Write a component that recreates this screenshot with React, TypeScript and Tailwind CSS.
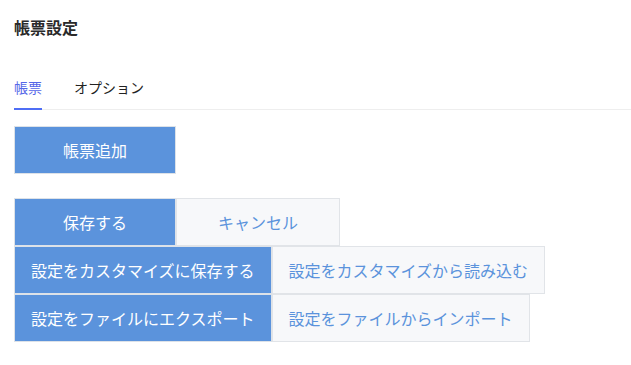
const font = { fontFamily: '"Noto Sans CJK JP", "Noto Sans", sans-serif' };

const primary =
  "h-12 min-w-[162px] px-4 border border-[#dde2e8] bg-[#5b93dc] text-[16px] text-white whitespace-nowrap";
const secondary =
  "h-12 min-w-[164px] px-4 border border-[#e1e4e8] bg-[#f7f8fa] text-[16px] text-[#5b93dc] whitespace-nowrap";

const rows: [string, string][] = [
  ["保存する", "キャンセル"],
  ["設定をカスタマイズに保存する", "設定をカスタマイズから読み込む"],
  ["設定をファイルにエクスポート", "設定をファイルからインポート"],
];

export default function App() {
  return (
    <div className="min-h-[365px] w-[631px] bg-white pl-[14px] pt-[15px]" style={font}>
      <h1 className="text-[16px] font-bold leading-6 text-[#2a2a2a]">帳票設定</h1>

      {/* tabs */}
      <div className="mt-[38px] flex gap-8 border-b border-[#eeeeee]">
        <button className="-mb-px border-b-2 border-[#4f6ef5] pb-[11px] text-[14px] leading-5 text-[#5566e8]">
          帳票
        </button>
        <button className="-mb-px border-b-2 border-transparent pb-[11px] text-[14px] leading-5 text-[#222222]">
          オプション
        </button>
      </div>

      <div className="mt-4">
        <button className={primary}>帳票追加</button>
      </div>

      <div className="mt-6 flex flex-col items-start">
        {rows.map(([a, b]) => (
          <div key={a} className="flex">
            <button className={primary}>{a}</button>
            <button className={secondary}>{b}</button>
          </div>
        ))}
      </div>
    </div>
  );
}
